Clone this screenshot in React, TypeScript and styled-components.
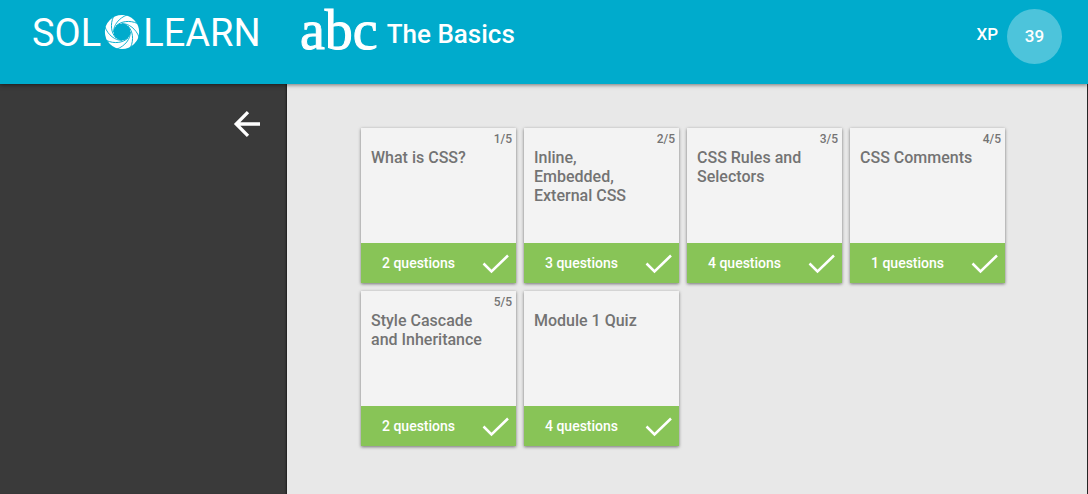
import React from "react";
import styled, { createGlobalStyle } from "styled-components";

const GlobalStyle = createGlobalStyle`
  * { box-sizing: border-box; }
  body {
    margin: 0;
    background: #262626;
    font-family: Roboto, "Liberation Sans", sans-serif;
    font-weight: 500;
  }
`;

const Page = styled.div`
  display: flex;
  flex-direction: column;
  min-height: 100vh;
`;

const Header = styled.header`
  position: relative;
  display: flex;
  align-items: flex-start;
  height: 84px;
  padding: 0 26px 0 32px;
  background: #00abcc;
  color: #fff;
  box-shadow: 0 1px 4px rgba(0, 0, 0, 0.5);
`;

const Brand = styled.a`
  display: flex;
  align-items: center;
  gap: 3px;
  width: 268px;
  color: #fff;
  font-size: 38px;
  font-weight: 400;
  line-height: 66px;
  text-decoration: none;
  svg { margin-bottom: 2px; }
`;

const Course = styled.div`
  display: flex;
  align-items: flex-start;
  flex: 1;
  gap: 9px;
`;

const Letters = styled.span`
  font-family: "Liberation Serif", serif;
  font-size: 56px;
  font-weight: 400;
  line-height: 60px;
  -webkit-text-stroke: 1px #fff;
`;

const Title = styled.h1`
  margin: 0;
  font-size: 26px;
  font-weight: 500;
  line-height: 68px;
`;

const Score = styled.div`
  display: flex;
  align-items: center;
  gap: 9px;
  padding-top: 9px;
  font-size: 17px;
`;

const ScoreLabel = styled.span`
  line-height: 50px;
  padding-bottom: 5px;
`;

const Points = styled.span`
  width: 55px;
  border-radius: 50%;
  background: #4dc4db;
  line-height: 55px;
  text-align: center;
`;

const Body = styled.div`
  display: flex;
  flex: 1;
  padding-right: 1px;
`;

const Sidebar = styled.aside`
  display: flex;
  justify-content: flex-end;
  align-items: flex-start;
  flex: 0 0 287px;
  padding: 26px 26px 0 0;
  background: #3a3a3a;
  box-shadow: inset -2px 0 2px -1px rgba(0, 0, 0, 0.5);
`;

const BackButton = styled.button`
  padding: 0;
  border: 0;
  background: none;
  color: #fff;
  cursor: pointer;
  svg { display: block; }
`;

const Main = styled.main`
  flex: 1;
  padding: 44px 74px;
  background: #e8e8e8;
`;

const Lessons = styled.ul`
  display: flex;
  flex-wrap: wrap;
  gap: 8px;
  margin: 0;
  padding: 0;
  list-style: none;
`;

const Card = styled.li`
  display: flex;
  flex-direction: column;
  width: 155px;
  height: 155px;
  background: #f3f3f3;
  color: #737373;
  box-shadow: 0 1px 3px rgba(0, 0, 0, 0.5);
`;

const Count = styled.span`
  height: 20px;
  padding-right: 4px;
  font-size: 12px;
  font-weight: 500;
  line-height: 22px;
  text-align: right;
`;

const CardTitle = styled.h2`
  flex: 1;
  margin: 0;
  padding: 0 30px 0 10px;
  font-size: 16px;
  font-weight: 500;
  line-height: 19px;
`;

const CardFooter = styled.div`
  display: flex;
  align-items: center;
  justify-content: space-between;
  height: 40px;
  padding: 0 6px 0 21px;
  background: #88c457;
  color: #fff;
  font-size: 14px;
`;

const blades = Array.from({ length: 8 }, (_, i) => i * 45);

const Swirl = () => (
  <svg width="36" height="36" viewBox="-18 -18 36 36" aria-hidden="true">
    <circle r="12.8" fill="none" stroke="#fff" strokeWidth="8.6" />
    {blades.map((angle) => (
      <path
        key={angle}
        transform={`rotate(${angle})`}
        fill="none"
        stroke="#00abcc"
        strokeWidth="0.9"
        d="M-8.4 0 C-8.5 -7 -3 -14 5 -17"
      />
    ))}
  </svg>
);

const Check = () => (
  <svg width="28" height="22" viewBox="0 0 28 22" aria-label="Completed" role="img">
    <path d="M1.5 11.5 L9.5 19.5 L26 3.5" fill="none" stroke="#fff" strokeWidth="2.5" />
  </svg>
);

const lessons = [
  { title: "What is CSS?", count: "1/5", questions: 2 },
  { title: "Inline, Embedded, External CSS", count: "2/5", questions: 3 },
  { title: "CSS Rules and Selectors", count: "3/5", questions: 4 },
  { title: "CSS Comments", count: "4/5", questions: 1 },
  { title: "Style Cascade and Inheritance", count: "5/5", questions: 2 },
  { title: "Module 1 Quiz", count: "", questions: 4 },
];

export default function App() {
  return (
    <Page>
      <GlobalStyle />
      <Header>
        <Brand href="#">
          <span>SOL</span>
          <Swirl />
          <span>LEARN</span>
        </Brand>
        <Course>
          <Letters>abc</Letters>
          <Title>The Basics</Title>
        </Course>
        <Score>
          <ScoreLabel>XP</ScoreLabel>
          <Points>39</Points>
        </Score>
      </Header>
      <Body>
        <Sidebar>
          <BackButton type="button" aria-label="Back">
            <svg width="28" height="28" viewBox="0 0 28 28" aria-hidden="true">
              <path d="M27 14 H4 M15 2.2 L3.2 14 L15 25.8" fill="none" stroke="currentColor" strokeWidth="3.3" />
            </svg>
          </BackButton>
        </Sidebar>
        <Main>
          <Lessons>
            {lessons.map((lesson) => (
              <Card key={lesson.title}>
                <Count>{lesson.count}</Count>
                <CardTitle>{lesson.title}</CardTitle>
                <CardFooter>
                  <span>{lesson.questions} questions</span>
                  <Check />
                </CardFooter>
              </Card>
            ))}
          </Lessons>
        </Main>
      </Body>
    </Page>
  );
}
